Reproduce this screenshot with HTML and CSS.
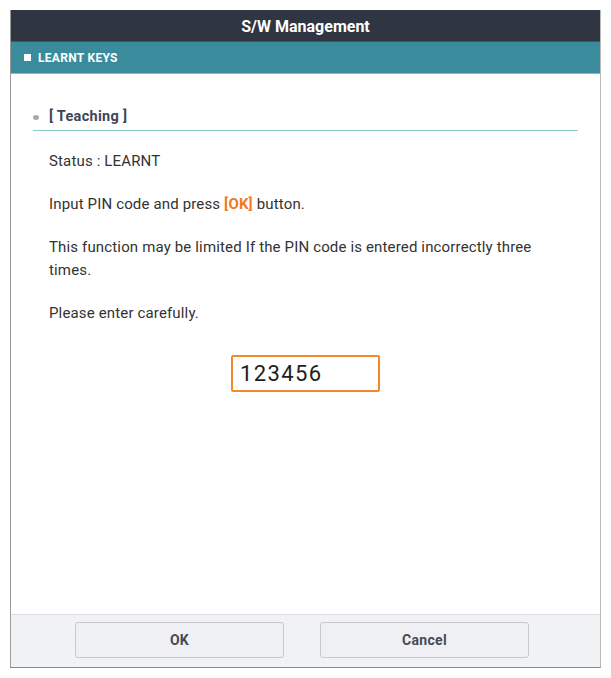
FILE: index.html
```html
<!DOCTYPE html>
<html>
<head>
<meta charset="utf-8">
<link rel="stylesheet" href="styles.css">
</head>
<body>
<div class="dialog">
  <div class="titlebar">S/W Management</div>
  <div class="tabbar"><span class="sq"></span>LEARNT KEYS</div>
  <div class="main">
    <div class="section-head"><span class="dot"></span>[ Teaching ]</div>
    <div class="body">
      <p>Status : LEARNT</p>
      <p>Input PIN code and press <span class="hl">[OK]</span> button.</p>
      <p>This function may be limited If the PIN code is entered incorrectly three times.</p>
      <p>Please enter carefully.</p>
    </div>
    <div class="pin-row"><div class="pin">123456</div></div>
  </div>
  <div class="footer">
    <button class="btn">OK</button>
    <button class="btn">Cancel</button>
  </div>
</div>
</body>
</html>
```

FILE: styles.css
```css
html, body {
  margin: 0;
  padding: 0;
  background: #ffffff;
}
body {
  padding: 10px 10px 10px 10px;
  font-family: Roboto, "Liberation Sans", sans-serif;
}
.dialog {
  width: 591px;
  height: 658px;
  box-sizing: border-box;
  display: flex;
  flex-direction: column;
  border-left: 1px solid #9a9a9a;
  border-right: 1px solid #b8b8b8;
  border-bottom: 1px solid #8a8a8a;
}
.titlebar {
  height: 32px;
  background: #2f3641;
  color: #ffffff;
  font-weight: bold;
  font-size: 16px;
  display: flex;
  align-items: center;
  justify-content: center;
  padding-top: 2px;
  border-bottom: 1px solid #2a5f6c;
  box-sizing: border-box;
}
.tabbar {
  height: 32px;
  background: #3a8c9d;
  color: #ffffff;
  font-weight: bold;
  font-size: 12px;
  letter-spacing: 0.3px;
  display: flex;
  align-items: center;
  padding-left: 13px;
  border-bottom: 1px solid #7fbccc;
  box-sizing: border-box;
}
.sq {
  width: 7px;
  height: 7px;
  background: #ffffff;
  margin-right: 7px;
}
.main {
  flex: 1;
  padding: 33px 22px 0 22px;
}
.section-head {
  display: flex;
  align-items: center;
  font-weight: bold;
  font-size: 14.5px;
  letter-spacing: 0.3px;
  color: #3e4656;
  line-height: 20px;
  padding-bottom: 3px;
  border-bottom: 1px solid #8ccbd3;
}
.dot {
  width: 6px;
  height: 5px;
  border-radius: 50%;
  background: #a8a8a8;
  margin-right: 10px;
}
.body {
  padding: 19px 30px 0 16px;
  color: #333333;
  font-size: 15px;
  letter-spacing: 0.15px;
  line-height: 23px;
}
.body p {
  margin: 0 0 20px 0;
}
.hl {
  color: #f27a1a;
  font-weight: bold;
}
.pin-row {
  display: flex;
  justify-content: center;
  padding-top: 10px;
}
.pin {
  width: 149px;
  height: 37px;
  box-sizing: border-box;
  border: 2px solid #f08a2a;
  border-radius: 2px;
  font-size: 22px;
  letter-spacing: 1.4px;
  color: #1e1e1e;
  padding-left: 7px;
  display: flex;
  align-items: center;
}
.footer {
  height: 53px;
  box-sizing: border-box;
  background: #f1f2f4;
  border-top: 1px solid #dcdde0;
  display: flex;
  justify-content: center;
  align-items: flex-start;
  gap: 36px;
  padding-top: 7px;
  padding-right: 7px;
}
.btn {
  width: 209px;
  height: 36px;
  background: #eff0f3;
  border: 1px solid #c8c9cc;
  border-radius: 3px;
  font-family: Roboto, "Liberation Sans", sans-serif;
  font-weight: bold;
  font-size: 14px;
  letter-spacing: 0.3px;
  color: #454b55;
}
```
